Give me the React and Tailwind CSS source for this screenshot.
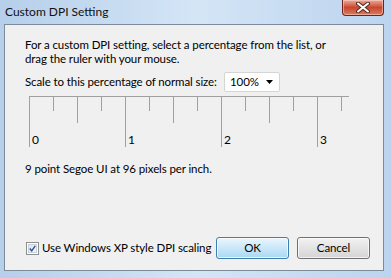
const FONT = "font-['Lato',sans-serif]"

function CloseButton() {
  return (
    <div className="w-[42px] h-[16px] rounded-b-[4px] border border-t-0 border-[#6e2218] bg-gradient-to-b from-[#e9a999] via-[#c9452d] to-[#d97b5f] flex items-center justify-center shadow-[inset_0_0_0_1px_rgba(255,220,210,0.5)]">
      <svg width="14" height="11" viewBox="0 0 14 11">
        <path d="M2 1.5 L12 9.5 M12 1.5 L2 9.5" stroke="#5a2a22" strokeWidth="4" strokeLinecap="round" />
        <path d="M2 1.5 L12 9.5 M12 1.5 L2 9.5" stroke="#ffffff" strokeWidth="2" strokeLinecap="round" />
      </svg>
    </div>
  )
}

function Ruler() {
  const quarters = [24, 72, 120, 168, 216, 264, 312]
  const halves = [48, 144, 240]
  const majors = [0, 96, 192, 288]
  return (
    <svg width="322" height="52" className="block ml-[24px] mt-[4px]">
      <line x1="0" y1="0.5" x2="320" y2="0.5" stroke="#a0a0a0" />
      {quarters.map(x => (
        <line key={'q' + x} x1={x + 0.5} y1="0" x2={x + 0.5} y2="15" stroke="#a0a0a0" />
      ))}
      {halves.map(x => (
        <line key={'h' + x} x1={x + 0.5} y1="0" x2={x + 0.5} y2="27" stroke="#a0a0a0" />
      ))}
      {majors.map((x, i) => (
        <g key={'m' + x}>
          <line x1={x + 0.5} y1="0" x2={x + 0.5} y2="51" stroke="#a0a0a0" />
          <text x={x + 3} y="48" fontSize="12" fill="#000" fontFamily="Lato, sans-serif">{i}</text>
        </g>
      ))}
    </svg>
  )
}

function Checkbox() {
  return (
    <div className="w-[13px] h-[13px] border border-[#8e8f8f] bg-white p-[1px]">
      <div className="w-full h-full border border-[#c9d2da] bg-gradient-to-br from-[#dfe4ea] to-[#f4f6f8] flex items-center justify-center">
        <svg width="9" height="9" viewBox="0 0 9 9">
          <path d="M1 4.5 L3.5 7.5 L8 1" fill="none" stroke="#2c4f93" strokeWidth="1.8" />
        </svg>
      </div>
    </div>
  )
}

export default function App() {
  return (
    <div className={`w-[391px] h-[278px] flex flex-col bg-gradient-to-r from-[#b6cfea] via-[#d4e5f6] to-[#bcd4ee] text-[11.5px] tracking-[-0.1px] text-black whitespace-nowrap ${FONT}`}>
      <div className="h-[24px] flex items-start justify-between pl-[5px] pr-[7px] shrink-0">
        <span className="mt-[4px] leading-[16px] text-[12px] tracking-normal text-[#111]">Custom DPI Setting</span>
        <CloseButton />
      </div>
      <div className="ml-[4px] w-[380px] h-[247px] border border-[#7d8a99] bg-[#f0f0f0] flex flex-col">
        <div className="pl-[20px] pt-[13px] leading-[14px]">
          <p>For a custom DPI setting, select a percentage from the list, or</p>
          <p>drag the ruler with your mouse.</p>
        </div>
        <div className="flex items-center pl-[20px] mt-[6px]">
          <span className="w-[199px]">Scale to this percentage of normal size:</span>
          <div className="w-[56px] h-[20px] bg-white border border-[#d5d5d5] rounded-[2px] flex items-center justify-between pl-[5px] pr-[6px]">
            <span>100%</span>
            <svg width="7" height="4" viewBox="0 0 7 4">
              <path d="M0 0 H7 L3.5 4 Z" fill="#000" />
            </svg>
          </div>
        </div>
        <Ruler />
        <p className="pl-[20px] mt-[14px] leading-[14px]">9 point Segoe UI at 96 pixels per inch.</p>
        <div className="flex-1" />
        <div className="flex items-center pl-[21px] pr-[13px] pb-[11px]">
          <Checkbox />
          <span className="ml-[3px]">Use Windows XP style DPI scaling</span>
          <div className="flex-1" />
          <button className="w-[73px] h-[22px] rounded-[3px] border border-[#3c7fb1] bg-gradient-to-b from-[#eaf6fd] to-[#a9d8f3] shadow-[inset_0_0_0_1px_rgba(255,255,255,0.7)]">OK</button>
          <button className="ml-[8px] w-[73px] h-[22px] rounded-[3px] border border-[#707070] bg-gradient-to-b from-[#f2f2f2] to-[#d4d4d4] shadow-[inset_0_0_0_1px_rgba(255,255,255,0.7)]">Cancel</button>
        </div>
      </div>
    </div>
  )
}
